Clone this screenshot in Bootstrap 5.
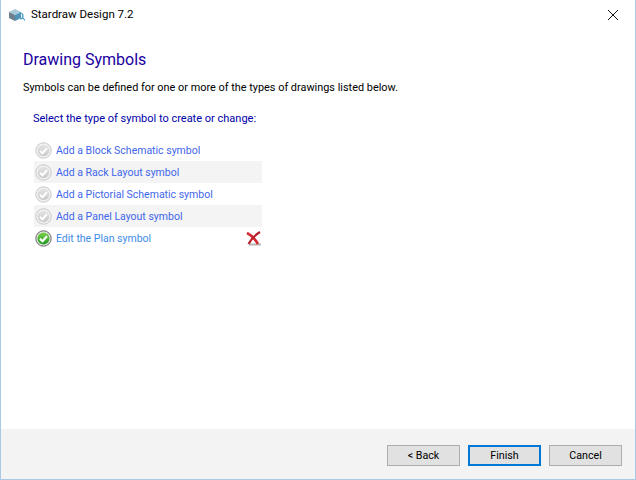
<!DOCTYPE html>
<html lang="en">
<head>
<meta charset="UTF-8">
<meta name="viewport" content="width=device-width, initial-scale=1.0">
<title>Stardraw Design 7.2</title>
<link rel="stylesheet" href="https://cdn.jsdelivr.net/npm/bootstrap@5.3.0/dist/css/bootstrap.min.css">
<style>
html, body { height: 100%; }
body { font-family: Roboto, "Liberation Sans", sans-serif; font-size: 10.9px; color: #000; background: #fff; overflow: hidden; }
.win { width: 636px; height: 480px; border: 1px solid #a9c9e6; border-top: 0; }
.titlebar { height: 30px; padding-left: 7px; gap: 5px; font-size: 11.5px; }
.close-x { width: 45px; height: 30px; }
.body-area { padding: 19px 0 0 22px; }
.page-title { font-size: 16px; font-weight: 400; color: #1a00a0; line-height: 22px; margin: 0 0 9px; }
.intro { line-height: 16px; margin: 0 0 15px 0; }
.prompt { color: #0000a8; font-size: 11px; line-height: 16px; margin: 0 0 12px 10px; }
.sym-list { width: 228px; margin-left: 11px; }
.sym-row { height: 22px; padding-left: 1px; gap: 4px; color: #3f66ea; font-size: 10.5px; }
.sym-row span { padding-top: 2px; }
.sym-row:nth-child(even) { background: #f4f4f4; }
.sym-row.done { color: #3d8be8; }
.del-icon { margin-left: auto; margin-right: 1px; }
.foot { height: 50px; background: #f3f3f3; padding: 16px 13px 0 0; gap: 8px; margin-top: auto; }
.wbtn { width: 73px; height: 21px; padding: 1px 0 0; border: 1px solid #adadad; border-radius: 0; background: #e1e1e1; color: #000; font-size: 10.7px; line-height: 18px; }
.wbtn.is-default { border: 2px solid #0078d7; line-height: 16px; }
</style>
</head>
<body>
<svg width="0" height="0" class="d-block">
  <defs>
    <linearGradient id="greyFill" x1="0" y1="0" x2="0" y2="1"><stop offset="0" stop-color="#e4e4e4"/><stop offset="1" stop-color="#c9c9c9"/></linearGradient>
    <linearGradient id="greenFill" x1="0" y1="0" x2="0" y2="1"><stop offset="0" stop-color="#7ed04a"/><stop offset="1" stop-color="#1f9a1f"/></linearGradient>
    <symbol id="tickGrey" viewBox="0 0 17 17">
      <circle cx="8.5" cy="8.5" r="7.7" fill="#f2f2f2" stroke="#c6c6c6"/>
      <circle cx="8.5" cy="8.5" r="5.8" fill="url(#greyFill)"/>
      <path d="M5 8.8 L7.5 11.2 L12 6.2" fill="none" stroke="#fff" stroke-width="2"/>
    </symbol>
    <symbol id="tickGreen" viewBox="0 0 17 17">
      <circle cx="8.5" cy="8.5" r="7.7" fill="#e4e4e4" stroke="#666"/>
      <circle cx="8.5" cy="8.5" r="6" fill="url(#greenFill)"/>
      <path d="M5 8.8 L7.5 11.2 L12 6.2" fill="none" stroke="#fff" stroke-width="2.2"/>
    </symbol>
  </defs>
</svg>
<div class="win d-flex flex-column">
  <div class="titlebar d-flex align-items-center">
    <svg width="18" height="14" viewBox="0 0 18 14">
      <path d="M1 4 L7 1 L13 4 L7 7 Z" fill="#a9c9da"/>
      <path d="M1 4 L7 7 V13 L1 10 Z" fill="#6d7f8e"/>
      <path d="M13 4 L7 7 V13 L13 10 Z" fill="#4f94b8"/>
      <path d="M12 5 a3 3 0 1 1 0 6 M15 10 l2 2.5" fill="none" stroke="#3f9bc4" stroke-width="1.2"/>
    </svg>
    <span>Stardraw Design 7.2</span>
    <svg class="close-x ms-auto" viewBox="0 0 45 30">
      <path d="M18 10 L28 20 M28 10 L18 20" stroke="#111" stroke-width="1" fill="none"/>
    </svg>
  </div>
  <div class="body-area">
    <h1 class="page-title">Drawing Symbols</h1>
    <p class="intro">Symbols can be defined for one or more of the types of drawings listed below.</p>
    <p class="prompt">Select the type of symbol to create or change:</p>
    <div class="sym-list">
      <div class="sym-row d-flex align-items-center">
        <svg width="17" height="17"><use href="#tickGrey"/></svg>
        <span>Add a Block Schematic symbol</span>
      </div>
      <div class="sym-row d-flex align-items-center">
        <svg width="17" height="17"><use href="#tickGrey"/></svg>
        <span>Add a Rack Layout symbol</span>
      </div>
      <div class="sym-row d-flex align-items-center">
        <svg width="17" height="17"><use href="#tickGrey"/></svg>
        <span>Add a Pictorial Schematic symbol</span>
      </div>
      <div class="sym-row d-flex align-items-center">
        <svg width="17" height="17"><use href="#tickGrey"/></svg>
        <span>Add a Panel Layout symbol</span>
      </div>
      <div class="sym-row done d-flex align-items-center">
        <svg width="17" height="17"><use href="#tickGreen"/></svg>
        <span>Edit the Plan symbol</span>
        <svg class="del-icon" width="15" height="15" viewBox="0 0 15 15">
          <path d="M3 13.5 H15" stroke="#b5b5b5" stroke-width="2"/>
          <path d="M1 2 C5 4 9 8 12 13" fill="none" stroke="#d42a32" stroke-width="2.6"/>
          <path d="M14 1 C9 4 5 8 2.5 13" fill="none" stroke="#b81e28" stroke-width="2.2"/>
        </svg>
      </div>
    </div>
  </div>
  <div class="foot d-flex justify-content-end align-items-start">
    <button type="button" class="btn wbtn">&lt; Back</button>
    <button type="button" class="btn wbtn is-default">Finish</button>
    <button type="button" class="btn wbtn">Cancel</button>
  </div>
</div>
<script src="https://cdn.jsdelivr.net/npm/bootstrap@5.3.0/dist/js/bootstrap.bundle.min.js"></script>
</body>
</html>
